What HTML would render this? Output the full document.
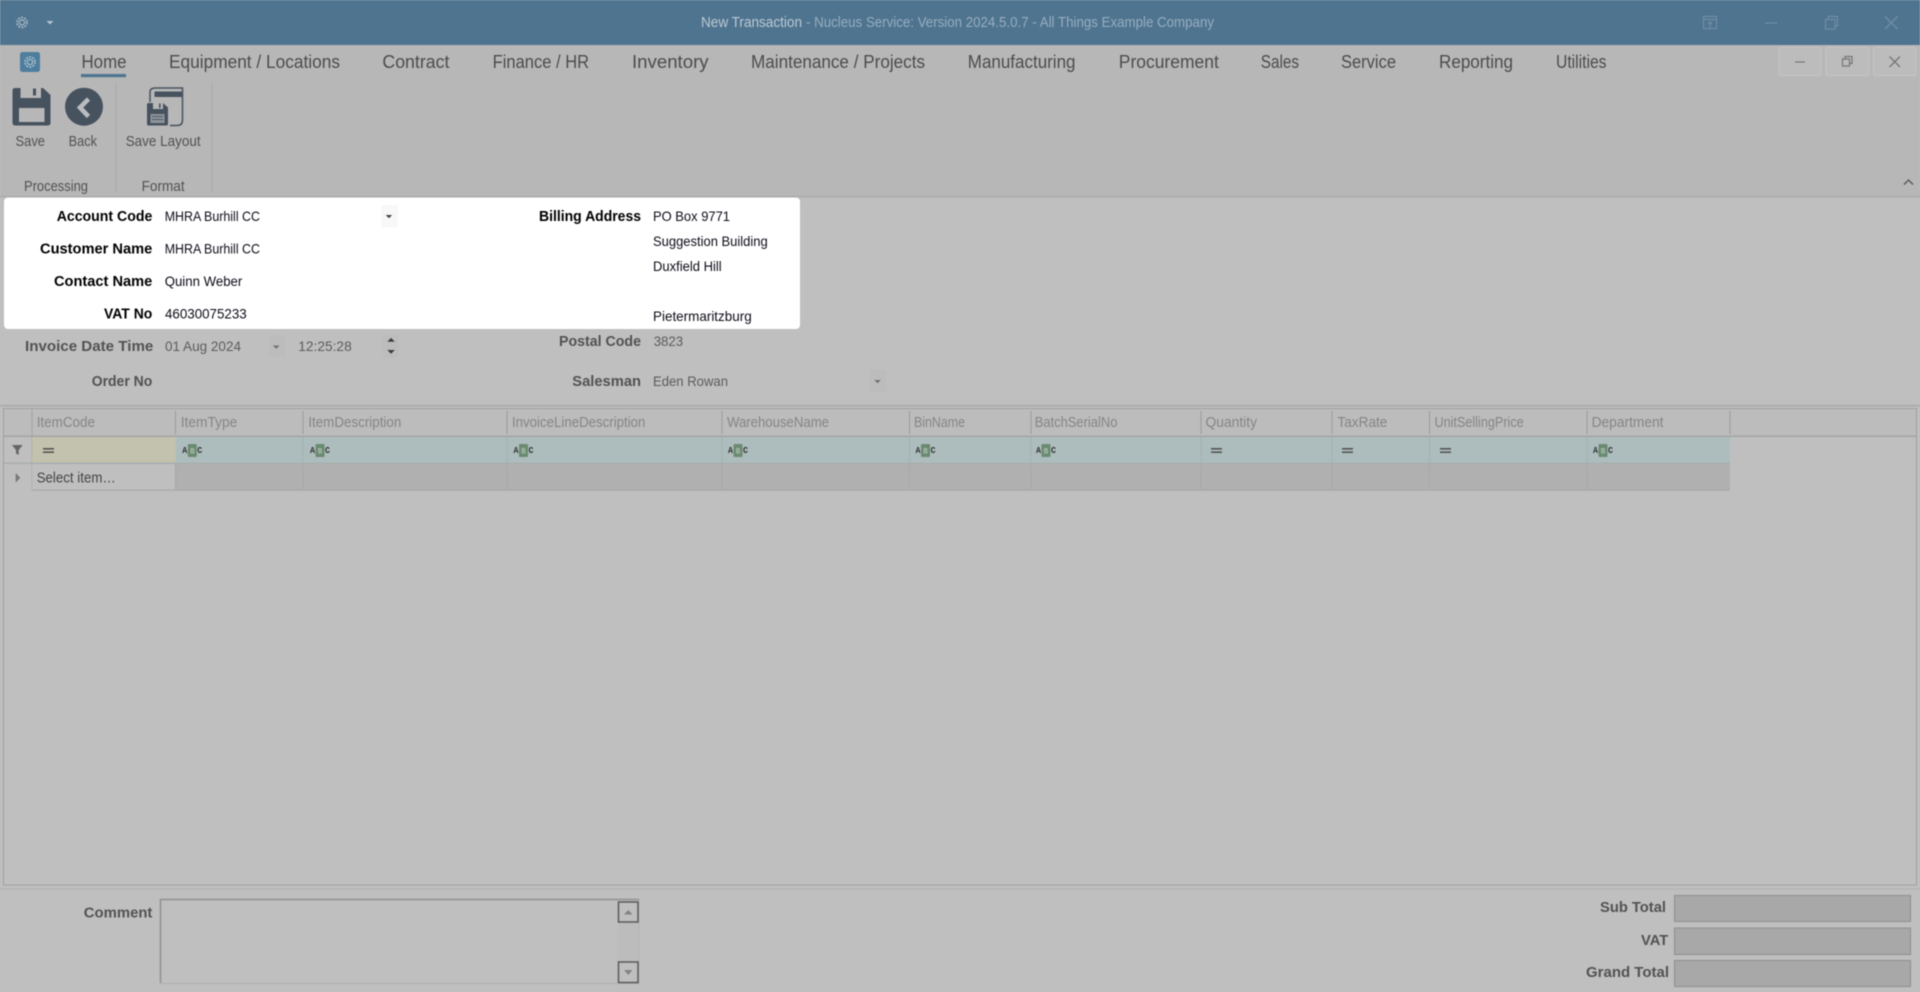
<!DOCTYPE html>
<html lang="en">
<head>
<meta charset="utf-8">
<title>New Transaction</title>
<style>
html,body{margin:0;padding:0;width:1920px;height:992px;overflow:hidden;background:#bfbfbf}
svg{display:block;filter:blur(.45px)}
text{font-family:"Liberation Sans",sans-serif;white-space:pre}
.m{font-size:18px;fill:#4c4c4c}
.r{font-size:14.5px;fill:#525252}
.lb{font-size:14.5px;font-weight:bold;fill:#000}
.ld{font-size:14.5px;font-weight:bold;fill:#525252}
.v{font-size:14px;fill:#0c0c18}
.vd{font-size:14px;fill:#5c5c5c}
.h{font-size:14.5px;fill:#858585}
.abc{font-family:"Liberation Mono",monospace;font-size:9.5px;font-weight:bold;fill:#333}
.abm{font-family:"Liberation Mono",monospace;font-size:8px;font-weight:bold;fill:#a9c0ad}
</style>
</head>
<body>
<svg xmlns="http://www.w3.org/2000/svg" width="1920" height="992" viewBox="0 0 1920 992">
<defs>
<g id="abc">
<text class="abc" x="0" y="9" textLength="5" lengthAdjust="spacingAndGlyphs">A</text>
<rect x="5.5" y="0" width="9" height="13" rx="1" fill="#6b8b71"/>
<text class="abm" x="7.8" y="9.5" textLength="4.5" lengthAdjust="spacingAndGlyphs">B</text>
<text class="abc" x="15" y="9" textLength="5" lengthAdjust="spacingAndGlyphs">C</text>
</g>
<g id="eq"><rect x="0" y="0" width="11" height="1.6" fill="#555"/><rect x="0" y="3.4" width="11" height="1.6" fill="#555"/></g>
<g id="gear" fill="none">
<circle cx="0" cy="0" r="5" stroke-width="1.6" stroke-dasharray="2 1.2"/>
<circle cx="0" cy="0" r="2.6" stroke-width="1.2"/>
</g>
</defs>

<!-- backgrounds -->
<rect width="1920" height="992" fill="#bfbfbf"/>
<rect width="1920" height="45" fill="#4f7490"/>
<rect y="45" width="1920" height="152" fill="#b7b7b7"/>
<rect y="196" width="1920" height="1.4" fill="#a9a9a9"/>

<!-- title bar -->
<use href="#gear" x="22" y="22.5" stroke="#a9bac7"/>
<path d="M46.5 21h7l-3.5 3.5z" fill="#b5c4cf"/>
<text x="701" y="27" font-size="14.5" fill="#bcc9d2" textLength="101" lengthAdjust="spacingAndGlyphs">New Transaction</text>
<text x="806" y="27" font-size="14.5" fill="#97adbe" textLength="408" lengthAdjust="spacingAndGlyphs">- Nucleus Service: Version 2024.5.0.7 - All Things Example Company</text>
<g fill="none" stroke="#6f8da4" stroke-width="1.2">
<rect x="1703.5" y="16.5" width="13" height="12"/>
<path d="M1703.5 19.5h13M1710 28v-6M1707.8 24l2.2-2.2 2.2 2.2"/>
<path d="M1765 23h12.5"/>
<rect x="1825.5" y="19.5" width="9.5" height="9.5"/>
<path d="M1828 19.5v-3h9.5v9.5h-2.5"/>
<path d="M1885 16.5l12.5 12.5M1897.5 16.5l-12.5 12.5" stroke-width="1.5"/>
</g>

<!-- menu row -->
<rect x="20" y="52" width="20" height="20" rx="2.5" fill="#4f7d9d"/>
<use href="#gear" x="30" y="62" stroke="#a9c0d0"/>
<text class="m" x="81.5" y="68" textLength="45" lengthAdjust="spacingAndGlyphs">Home</text>
<rect x="81" y="74" width="45" height="3.2" fill="#4f7490"/>
<text class="m" x="169" y="68" textLength="171" lengthAdjust="spacingAndGlyphs">Equipment / Locations</text>
<text class="m" x="382.4" y="68" textLength="67" lengthAdjust="spacingAndGlyphs">Contract</text>
<text class="m" x="492.6" y="68" textLength="96.5" lengthAdjust="spacingAndGlyphs">Finance / HR</text>
<text class="m" x="632" y="68" textLength="76.6" lengthAdjust="spacingAndGlyphs">Inventory</text>
<text class="m" x="751" y="68" textLength="174" lengthAdjust="spacingAndGlyphs">Maintenance / Projects</text>
<text class="m" x="967.8" y="68" textLength="107.7" lengthAdjust="spacingAndGlyphs">Manufacturing</text>
<text class="m" x="1118.8" y="68" textLength="100" lengthAdjust="spacingAndGlyphs">Procurement</text>
<text class="m" x="1260.8" y="68" textLength="38.2" lengthAdjust="spacingAndGlyphs">Sales</text>
<text class="m" x="1341" y="68" textLength="55" lengthAdjust="spacingAndGlyphs">Service</text>
<text class="m" x="1439" y="68" textLength="74" lengthAdjust="spacingAndGlyphs">Reporting</text>
<text class="m" x="1556" y="68" textLength="50.5" lengthAdjust="spacingAndGlyphs">Utilities</text>

<!-- window buttons -->
<g fill="#bcbcbc" stroke="#c4c4c4">
<rect x="1779" y="47.5" width="42" height="28" rx="1"/>
<rect x="1826" y="47.5" width="43" height="28" rx="1"/>
<rect x="1873.5" y="47.5" width="42.5" height="28" rx="1"/>
</g>
<g fill="none" stroke="#767676" stroke-width="1.2">
<path d="M1795 62h10"/>
<rect x="1842.5" y="59" width="7" height="7"/>
<path d="M1845 59v-2.5h7v7h-2.5"/>
<path d="M1889.5 56.5l10.500 10.500M1900 56.500l-10.500 10.500" stroke-width="1.3"/>
</g>

<!-- ribbon separators -->
<rect x="115.500" y="83" width="1" height="109" fill="#a9a9a9"/>
<rect x="211.500" y="83" width="1" height="109" fill="#a9a9a9"/>

<!-- save icon -->
<path d="M15 88H43L50.500 95V123a2.500 2.500 0 0 1-2.500 2.500H15a2.500 2.500 0 0 1-2.500-2.500V90.500A2.500 2.500 0 0 1 15 88z" fill="#47525f"/>
<rect x="20.500" y="88" width="20.500" height="10" fill="#b7b7b7"/>
<rect x="33" y="88.500" width="3" height="7" fill="#47525f"/>
<rect x="19" y="108" width="25.500" height="14" fill="#b7b7b7"/>
<!-- back icon -->
<circle cx="84" cy="106.700" r="19" fill="#47525f"/>
<path d="M88.500 99L80 107.500L88.500 116.500" fill="none" stroke="#b9bcbf" stroke-width="4.600"/>
<!-- save layout icon -->
<path d="M150 102V92.500Q150 88 155 88H182.500V120Q182.500 125.500 177 125.500H170" fill="none" stroke="#47525f" stroke-width="1.500"/>
<rect x="154.500" y="91.500" width="28" height="5.500" fill="#47525f"/>
<path d="M148.500 103H163L168 107.500V124a1.500 1.500 0 0 1-1.500 1.500H148.500a1.500 1.500 0 0 1-1.500-1.500V104.500a1.500 1.500 0 0 1 1.500-1.500z" fill="#47525f"/>
<rect x="153" y="103" width="10" height="6" fill="#b7b7b7"/>
<rect x="159" y="103.500" width="1.600" height="4.500" fill="#47525f"/>
<rect x="150.500" y="114" width="14" height="9" fill="#8f959b"/>
<path d="M152 116.500h11M152 119.500h11" stroke="#4e5864" stroke-width="1"/>

<text class="r" x="15.500" y="146" textLength="29.500" lengthAdjust="spacingAndGlyphs">Save</text>
<text class="r" x="68.600" y="146" textLength="28.400" lengthAdjust="spacingAndGlyphs">Back</text>
<text class="r" x="125.700" y="146" textLength="75" lengthAdjust="spacingAndGlyphs">Save Layout</text>
<text class="r" x="24" y="191" textLength="64" lengthAdjust="spacingAndGlyphs">Processing</text>
<text class="r" x="141.600" y="191" textLength="43" lengthAdjust="spacingAndGlyphs">Format</text>
<path d="M1904 184.500l4.500-4.500 4.500 4.500" fill="none" stroke="#5c5c5c" stroke-width="1.500"/>

<!-- white panel -->
<rect x="4" y="197.500" width="796" height="131.500" rx="4" fill="#ffffff"/>
<text class="lb" x="56.700" y="221" textLength="95.600" lengthAdjust="spacingAndGlyphs">Account Code</text>
<text class="lb" x="40" y="253.500" textLength="112.300" lengthAdjust="spacingAndGlyphs">Customer Name</text>
<text class="lb" x="54" y="286" textLength="98.300" lengthAdjust="spacingAndGlyphs">Contact Name</text>
<text class="lb" x="104" y="318.500" textLength="48.300" lengthAdjust="spacingAndGlyphs">VAT No</text>
<text class="v" x="164.700" y="221" textLength="95.300" lengthAdjust="spacingAndGlyphs">MHRA Burhill CC</text>
<text class="v" x="164.700" y="253.500" textLength="95.300" lengthAdjust="spacingAndGlyphs">MHRA Burhill CC</text>
<text class="v" x="164.700" y="286" textLength="77.600" lengthAdjust="spacingAndGlyphs">Quinn Weber</text>
<text class="v" x="165" y="318.500" textLength="81.700" lengthAdjust="spacingAndGlyphs">46030075233</text>
<rect x="381" y="205" width="16.700" height="22.300" fill="#f8f8f8"/>
<path d="M385.700 215h6.500l-3.250 3.300z" fill="#444"/>
<text class="lb" x="539" y="221" textLength="102" lengthAdjust="spacingAndGlyphs">Billing Address</text>
<text class="v" x="653" y="221" textLength="77" lengthAdjust="spacingAndGlyphs">PO Box 9771</text>
<text class="v" x="653" y="246" textLength="114.700" lengthAdjust="spacingAndGlyphs">Suggestion Building</text>
<text class="v" x="653" y="271" textLength="68.700" lengthAdjust="spacingAndGlyphs">Duxfield Hill</text>
<text class="v" x="653" y="321" textLength="98.700" lengthAdjust="spacingAndGlyphs">Pietermaritzburg</text>

<!-- dimmed form fields -->
<text class="ld" x="25" y="351" textLength="128.300" lengthAdjust="spacingAndGlyphs">Invoice Date Time</text>
<text class="vd" x="165" y="351" textLength="76" lengthAdjust="spacingAndGlyphs">01 Aug 2024</text>
<rect x="269" y="335.700" width="16" height="21" fill="#bcbcbc"/>
<path d="M273 345.500h6.500l-3.250 3.300z" fill="#707070"/>
<text class="vd" x="298.300" y="351" textLength="53.400" lengthAdjust="spacingAndGlyphs">12:25:28</text>
<rect x="383.300" y="335.700" width="14.400" height="21" fill="#bcbcbc"/>
<path d="M387.300 341.700h7.500l-3.750-3.800zM387.300 350h7.500l-3.750 3.800z" fill="#3b3b3b"/>
<text class="ld" x="91.700" y="386" textLength="60.600" lengthAdjust="spacingAndGlyphs">Order No</text>
<text class="ld" x="559" y="346" textLength="82" lengthAdjust="spacingAndGlyphs">Postal Code</text>
<text class="vd" x="653.700" y="346" textLength="29.500" lengthAdjust="spacingAndGlyphs">3823</text>
<text class="ld" x="572.300" y="386" textLength="68.700" lengthAdjust="spacingAndGlyphs">Salesman</text>
<text class="vd" x="653" y="386" textLength="75" lengthAdjust="spacingAndGlyphs">Eden Rowan</text>
<rect x="870" y="370" width="16" height="21.700" fill="#bcbcbc"/>
<path d="M874.300 380h6.500l-3.250 3.300z" fill="#707070"/>

<!-- grid frame -->
<rect x="0" y="405" width="1920" height="1.500" fill="#a8a8a8"/>
<rect x="3.500" y="408.500" width="1913" height="476.500" fill="#bfbfbf" stroke="#a0a0a0" stroke-width="1"/>
<rect x="0" y="888.500" width="1920" height="1" fill="#b0b0b0"/>

<!-- grid header -->
<rect x="4" y="409" width="1912" height="27" fill="#bcbcbc"/>
<rect x="4" y="435.500" width="1912" height="1.500" fill="#a3a3a3"/>
<rect x="31.500" y="409" width="1" height="81" fill="#a3a3a3"/>
<g fill="#9c9c9c">
<rect x="175" y="411" width="1" height="23"/>
<rect x="302.500" y="411" width="1" height="23"/>
<rect x="506.500" y="411" width="1" height="23"/>
<rect x="721.500" y="411" width="1" height="23"/>
<rect x="909" y="411" width="1" height="23"/>
<rect x="1030.500" y="411" width="1" height="23"/>
<rect x="1200.500" y="411" width="1" height="23"/>
<rect x="1331.500" y="411" width="1" height="23"/>
<rect x="1429" y="411" width="1" height="23"/>
<rect x="1586.500" y="411" width="1" height="23"/>
<rect x="1729.500" y="411" width="1" height="23"/>
</g>
<text class="h" x="36.700" y="427" textLength="58.300" lengthAdjust="spacingAndGlyphs">ItemCode</text>
<text class="h" x="180.700" y="427" textLength="56.600" lengthAdjust="spacingAndGlyphs">ItemType</text>
<text class="h" x="308.300" y="427" textLength="93" lengthAdjust="spacingAndGlyphs">ItemDescription</text>
<text class="h" x="512" y="427" textLength="133.400" lengthAdjust="spacingAndGlyphs">InvoiceLineDescription</text>
<text class="h" x="727" y="427" textLength="102" lengthAdjust="spacingAndGlyphs">WarehouseName</text>
<text class="h" x="914" y="427" textLength="51" lengthAdjust="spacingAndGlyphs">BinName</text>
<text class="h" x="1034.700" y="427" textLength="82.700" lengthAdjust="spacingAndGlyphs">BatchSerialNo</text>
<text class="h" x="1205.500" y="427" textLength="51.500" lengthAdjust="spacingAndGlyphs">Quantity</text>
<text class="h" x="1337.400" y="427" textLength="50" lengthAdjust="spacingAndGlyphs">TaxRate</text>
<text class="h" x="1434.500" y="427" textLength="89.200" lengthAdjust="spacingAndGlyphs">UnitSellingPrice</text>
<text class="h" x="1591.600" y="427" textLength="71.900" lengthAdjust="spacingAndGlyphs">Department</text>

<!-- filter row -->
<rect x="32" y="437" width="143" height="25.500" fill="#c2c2ae"/>
<rect x="176" y="437" width="1554" height="25.500" fill="#adbdbd"/>
<rect x="4" y="462.500" width="1726" height="1.500" fill="#a9aeae"/>
<g fill="#a2b2b2">
<rect x="302.500" y="437" width="1" height="25.500"/>
<rect x="506.500" y="437" width="1" height="25.500"/>
<rect x="721.500" y="437" width="1" height="25.500"/>
<rect x="909" y="437" width="1" height="25.500"/>
<rect x="1030.500" y="437" width="1" height="25.500"/>
<rect x="1200.500" y="437" width="1" height="25.500"/>
<rect x="1331.500" y="437" width="1" height="25.500"/>
<rect x="1429" y="437" width="1" height="25.500"/>
<rect x="1586.500" y="437" width="1" height="25.500"/>
</g>
<path d="M12 445h10.700l-4 5v5l-2.700-1.500v-3.500z" fill="#666"/>
<use href="#eq" x="43" y="448"/>
<use href="#abc" x="182.300" y="444"/>
<use href="#abc" x="310" y="444"/>
<use href="#abc" x="513.500" y="444"/>
<use href="#abc" x="728" y="444"/>
<use href="#abc" x="915.500" y="444"/>
<use href="#abc" x="1036" y="444"/>
<use href="#eq" x="1211" y="448"/>
<use href="#eq" x="1342" y="448"/>
<use href="#eq" x="1440" y="448"/>
<use href="#abc" x="1593" y="444"/>

<!-- data row -->
<rect x="32" y="464" width="143" height="26" fill="#bfbfbf"/>
<rect x="175" y="464" width="1555" height="26" fill="#b0b0b0"/>
<rect x="32" y="489.500" width="1698" height="1.200" fill="#a8a8a8"/>
<g fill="#a8a8a8">
<rect x="175" y="464" width="1" height="26"/>
<rect x="302.500" y="464" width="1" height="26"/>
<rect x="506.500" y="464" width="1" height="26"/>
<rect x="721.500" y="464" width="1" height="26"/>
<rect x="909" y="464" width="1" height="26"/>
<rect x="1030.500" y="464" width="1" height="26"/>
<rect x="1200.500" y="464" width="1" height="26"/>
<rect x="1331.500" y="464" width="1" height="26"/>
<rect x="1429" y="464" width="1" height="26"/>
<rect x="1586.500" y="464" width="1" height="26"/>
</g>
<path d="M15.700 473l4.500 4.800-4.500 4.800z" fill="#777"/>
<text x="36.700" y="482.500" font-size="14.500" fill="#454545" textLength="79" lengthAdjust="spacingAndGlyphs">Select item…</text>

<!-- comment -->
<text class="ld" x="83.800" y="917.500" textLength="68.600" lengthAdjust="spacingAndGlyphs">Comment</text>
<rect x="160.500" y="899.500" width="478.500" height="84" fill="#bfbfbf" stroke="#b0b0b0"/>
<path d="M160.500 983V899.500H639" fill="none" stroke="#909090" stroke-width="1.500"/>
<rect x="618" y="901" width="21" height="82" fill="#bcbcbc"/>
<rect x="618.500" y="902" width="19.500" height="20" fill="#bfbfbf" stroke="#5a5a5a" stroke-width="1.500"/>
<rect x="618.500" y="962" width="19.500" height="20.500" fill="#bfbfbf" stroke="#5a5a5a" stroke-width="1.500"/>
<path d="M624 914.500h8.500l-4.250-4.500zM624 970h8.500l-4.250 5z" fill="#848484"/>

<!-- totals -->
<text class="ld" x="1600" y="912" textLength="66" lengthAdjust="spacingAndGlyphs">Sub Total</text>
<text class="ld" x="1641" y="945" textLength="27.300" lengthAdjust="spacingAndGlyphs">VAT</text>
<text class="ld" x="1586" y="977" textLength="83" lengthAdjust="spacingAndGlyphs">Grand Total</text>
<g fill="#a8a8a8" stroke="#949494" stroke-width="1.200">
<rect x="1674.500" y="895.500" width="236" height="26"/>
<rect x="1674.500" y="928" width="236" height="26.500"/>
<rect x="1674.500" y="960.500" width="236" height="26"/>
</g>
</svg>
</body>
</html>
